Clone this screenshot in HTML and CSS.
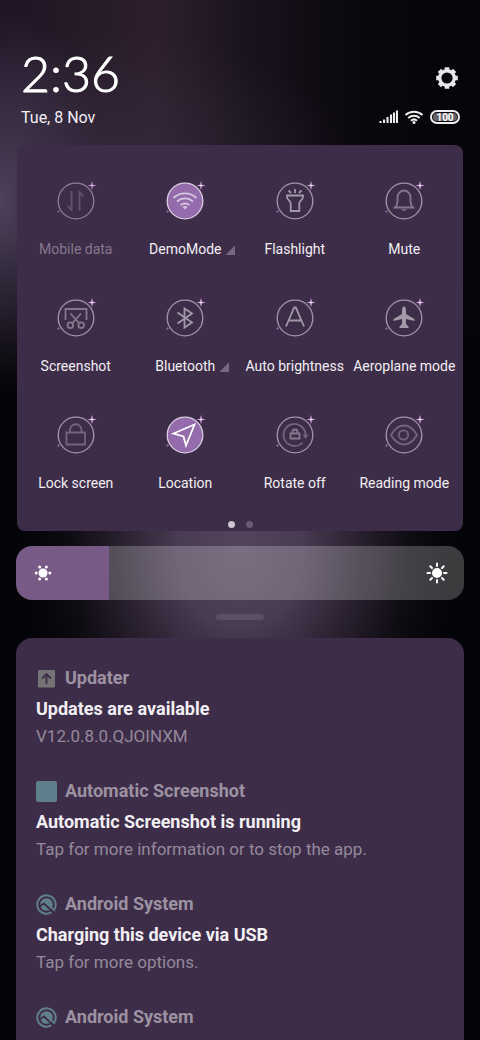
FILE: index.html
```html
<!DOCTYPE html>
<html lang="en">
<head>
<meta charset="utf-8">
<meta name="viewport" content="width=device-width, initial-scale=1">
<title>Control centre</title>
<link rel="stylesheet" href="styles.css">
</head>
<body>
<svg class="sprites" aria-hidden="true">
  <symbol id="ring" viewBox="0 0 44 44">
    <circle class="ring-shape" cx="22" cy="24" r="17.8"/>
    <path class="glow" d="M38 3.500L39 7.500L43 8.500L39 9.500L38 13.500L37 9.500L33 8.500L37 7.500Z"/>
    <path class="spark" d="M38 4.500L38.500 8L42 8.500L38.500 9L38 12.500L37.500 9L34 8.500L37.500 8Z"/>
    <path class="glow" d="M4.500 32.500L5 34L6.500 34.500L5 35L4.500 36.500L4 35L2.500 34.500L4 34Z"/>
  </symbol>
  <symbol id="android-q" viewBox="0 0 21 21">
    <path d="M15.500 18.200A9.200 9.200 0 1 1 18.500 15" fill="none" stroke="currentColor" stroke-width="2"/>
    <circle cx="10.500" cy="10.500" r="6.300" fill="currentColor"/>
    <path d="M3.500 12.500L8 9.500L16.500 17.500" fill="none" stroke="#3e2d48" stroke-width="1.800"/>
    <path d="M9.800 8.200L19 16.800" fill="none" stroke="currentColor" stroke-width="1.800"/>
  </symbol>
</svg>
<main class="shade">
  <header class="header">
    <div class="clock">
      <time class="time">2:36</time>
      <div class="date">Tue, 8 Nov</div>
    </div>
    <div class="status">
      <button class="settings" aria-label="Settings">
        <svg viewBox="0 0 24 24" width="24" height="24" fill="none" stroke="#e8e6ea"><circle cx="12" cy="12" r="7.300" stroke-width="3.400"/><path d="M12 1.200V4M12 20V22.800M1.200 12H4M20 12H22.800M4.400 4.400L6.300 6.300M17.700 17.700L19.600 19.600M19.600 4.400L17.700 6.300M6.300 17.700L4.400 19.600" stroke-width="4.600"/></svg>
      </button>
      <div class="indicators">
        <svg viewBox="0 0 19 14" width="19" height="14" aria-label="Signal"><path d="M1.500 11V13M5 9.500V13M8.500 7V13M12 4.500V13M15 2.500V13M18 .5V13" fill="none" stroke="#eee" stroke-width="2.100"/></svg>
        <svg viewBox="0 0 20 14" width="20" height="14" aria-label="Wi-Fi"><path d="M1.500 5A12.400 12.400 0 0 1 18.500 5M4.300 8A8.400 8.400 0 0 1 15.700 8M7 10.700A4.600 4.600 0 0 1 13 10.700" fill="none" stroke="#eee" stroke-width="2"/><circle cx="10" cy="12.400" r="1.500" fill="#eee"/></svg>
        <span class="battery"><span class="level">100</span></span>
      </div>
    </div>
  </header>

  <section class="toggles" aria-label="Quick settings">
    <div class="grid">
      <button class="tile off"><span class="icon"><svg viewBox="0 0 44 44"><use href="#ring"/><g class="dim"><path d="M17.500 14V33L13.500 28.500M25.500 34V15L29.500 19.500" stroke-width="2"/></g></svg></span><span class="label">Mobile data</span></button>
      <button class="tile on"><span class="icon"><svg viewBox="0 0 44 44"><use href="#ring"/><g class="soft"><path d="M10.500 21A16.500 16.500 0 0 1 33.500 21M14 24.700A11.500 11.500 0 0 1 30 24.700M17.600 28.200A6.500 6.500 0 0 1 26.400 28.200"/><path class="solid" d="M19.500 30Q22 27.800 24.500 30L22 32.500Z"/></g></svg></span><span class="label more">DemoMode</span></button>
      <button class="tile"><span class="icon"><svg viewBox="0 0 44 44"><use href="#ring"/><g class="line"><path d="M14 18.500H30V20Q30 22 27.500 24Q26.300 25 26.300 27V34H17.700V27Q17.700 25 16.500 24Q14 22 14 20ZM22 12V16M15.500 13.500L18 16M28.500 13.500L26 16"/></g></svg></span><span class="label">Flashlight</span></button>
      <button class="tile"><span class="icon"><svg viewBox="0 0 44 44"><use href="#ring"/><g class="mid"><path d="M13 30.500Q15.500 28 15.500 25V20.500A6.500 7 0 0 1 28.500 20.500V25Q28.500 28 31 30.500Z"/><path class="solid" d="M19 32.200H25Q22 35.200 19 32.200Z"/></g></svg></span><span class="label">Mute</span></button>

      <button class="tile"><span class="icon"><svg viewBox="0 0 44 44"><use href="#ring"/><g class="mid"><path d="M11.500 26V15H32.500V26M16.500 19.500L25.500 29.500M27 19.500L18 29.500"/><circle cx="16.300" cy="31.200" r="2.800"/><circle cx="27.200" cy="31.200" r="2.800"/></g></svg></span><span class="label">Screenshot</span></button>
      <button class="tile"><span class="icon"><svg viewBox="0 0 44 44"><use href="#ring"/><g class="line"><path d="M14.500 18.500L29 28.500L21.500 33.500V14.500L29 19.500L14.500 29.500"/></g></svg></span><span class="label more">Bluetooth</span></button>
      <button class="tile"><span class="icon"><svg viewBox="0 0 44 44"><use href="#ring"/><g class="line"><path d="M13 32.500L21.200 13.500H22.800L31 32.500M16 26.500H28"/></g></svg></span><span class="label">Auto brightness</span></button>
      <button class="tile"><span class="icon"><svg viewBox="0 0 44 44"><use href="#ring"/><g class="line"><path class="solid" d="M22 12Q24 13 24 16V20L32.500 25V27L24 25V30L26.500 32.500V34H17.500V32.500L20 30V25L11.500 27V25L20 20V16Q20 13 22 12Z"/></g></svg></span><span class="label">Aeroplane mode</span></button>

      <button class="tile"><span class="icon"><svg viewBox="0 0 44 44"><use href="#ring"/><g class="faint"><path d="M12.500 21.500H31V33.500H12.500ZM16 21.500V19A5.700 5.700 0 0 1 27.500 19V21.500"/></g></svg></span><span class="label">Lock screen</span></button>
      <button class="tile on"><span class="icon"><svg viewBox="0 0 44 44"><use href="#ring"/><g class="bright"><path d="M31.500 13.500L10.500 22.500L20.500 25.500L23 34.500Z"/></g></svg></span><span class="label">Location</span></button>
      <button class="tile"><span class="icon"><svg viewBox="0 0 44 44"><use href="#ring"/><g class="faint"><path d="M29.500 31.500A11 11 0 1 1 32.500 24"/><path class="solid" d="M29.500 23.500H35.500L32.500 28Z"/></g><g class="mid"><path d="M17.500 22.500H26.500V27.500H17.500ZM19.500 22.500V21A2.500 2.500 0 0 1 24.500 21V22.500"/></g></svg></span><span class="label">Rotate off</span></button>
      <button class="tile"><span class="icon"><svg viewBox="0 0 44 44"><use href="#ring"/><g class="faint"><path d="M9 24Q14.500 14.500 22 14.500T35 24Q29.500 33.500 22 33.500T9 24Z"/><circle cx="21.500" cy="24" r="4.700"/></g></svg></span><span class="label">Reading mode</span></button>
    </div>
    <div class="pages"><span class="dot current"></span><span class="dot"></span></div>
  </section>

  <div class="brightness">
    <input class="range" type="range" min="0" max="1000" value="208" aria-label="Brightness" style="--level: 20.8%">
    <svg class="sun low" viewBox="0 0 22 22" width="22" height="22" fill="#fff"><circle cx="11" cy="11" r="4.500"/><circle cx="4.200" cy="11" r="1.500"/><circle cx="17.800" cy="11" r="1.500"/><circle cx="7.600" cy="5.100" r="1.500"/><circle cx="14.400" cy="5.100" r="1.500"/><circle cx="7.600" cy="16.900" r="1.500"/><circle cx="14.400" cy="16.900" r="1.500"/></svg>
    <svg class="sun high" viewBox="0 0 22 22" width="22" height="22" fill="#fff" stroke="#fff" stroke-width="2" stroke-linecap="round"><circle cx="11" cy="11" r="4"/><path d="M11 1.500V4M11 18V20.500M1.500 11H4M18 11H20.500M4.300 4.300L6 6M16 16L17.700 17.700M17.700 4.300L16 6M6 16L4.300 17.700"/></svg>
  </div>
  <div class="handle"></div>

  <section class="notifications" aria-label="Notifications">
    <article class="note">
      <div class="app"><svg class="app-icon grey" viewBox="0 0 21 21"><rect x="2" y="2" width="17" height="17.500" rx="1" fill="currentColor"/><path d="M10.500 16V6M6 10.500L10.500 6L15 10.500" fill="none" stroke="#3e2d48" stroke-width="1.900"/></svg><span>Updater</span></div>
      <h2 class="title">Updates are available</h2>
      <p class="text">V12.0.8.0.QJOINXM</p>
    </article>
    <article class="note">
      <div class="app"><svg class="app-icon" viewBox="0 0 21 21"><rect width="21" height="21" rx="2" fill="currentColor"/></svg><span>Automatic Screenshot</span></div>
      <h2 class="title">Automatic Screenshot is running</h2>
      <p class="text">Tap for more information or to stop the app.</p>
    </article>
    <article class="note">
      <div class="app"><svg class="app-icon"><use href="#android-q"/></svg><span>Android System</span></div>
      <h2 class="title">Charging this device via USB</h2>
      <p class="text">Tap for more options.</p>
    </article>
    <article class="note">
      <div class="app"><svg class="app-icon"><use href="#android-q"/></svg><span>Android System</span></div>
      <h2 class="title">USB debugging connected</h2>
    </article>
  </section>
</main>
</body>
</html>
```
FILE: styles.css
```css
* { box-sizing: border-box; }
body { margin: 0; background: #050408; font-family: Roboto, sans-serif; color: #f2eff4; }
button { border: 0; padding: 0; background: none; color: inherit; font: inherit; }
.sprites { position: absolute; width: 0; height: 0; }

.shade {
  height: 100vh;
  overflow: hidden;
  padding: 48px 16px 0;
  background:
    radial-gradient(ellipse 210px 260px at 240px 550px, #54455d 0%, #493b52 30%, #35293ccc 55%, #19141e80 80%, transparent 100%),
    radial-gradient(ellipse 110px 190px at 0 200px, #4e425b 0%, #41364db3 40%, transparent 100%),
    radial-gradient(ellipse 260px 130px at 90px 160px, #3a2f4599 0%, transparent 100%),
    linear-gradient(180deg, transparent 150px, #050408 340px),
    linear-gradient(90deg, #1f1424, #2d1f2c 33%, #19131d 52%, #0a070d 75%, #050408);
}

.header { display: flex; justify-content: space-between; padding: 0 4px 0 5px; height: 97px; }
.time { display: block; font: 300 50px/50px Lato, sans-serif; color: #fff; -webkit-text-stroke: 1px #fff; }
.date { font-size: 16px; line-height: 20px; padding-top: 10px; }
.status { display: flex; flex-direction: column; align-items: flex-end; padding-top: 18px; }
.settings { width: 24px; height: 24px; margin-right: 1px; }
.settings svg { display: block; }
.indicators { display: flex; align-items: center; gap: 6px; margin-top: 20px; }
.battery { display: flex; width: 30px; height: 14px; padding: 1px; border: 2px solid #eee; border-radius: 7px; }
.level { flex: 1; border-radius: 4px; background: #66636a; font-size: 10px; font-weight: 700; line-height: 9px; text-align: center; color: #fff; }

.toggles { margin: 0 1px; padding: 32px 4px 3px; border-radius: 8px; background: #3e2d48; }
.grid { display: grid; grid-template-columns: repeat(4, 1fr); row-gap: 35px; }
.tile { display: flex; flex-direction: column; align-items: center; gap: 19px; white-space: nowrap; }
.icon { width: 44px; height: 44px; }
.icon svg { display: block; width: 44px; height: 44px; }
.icon path, .icon circle { fill: none; stroke: currentColor; stroke-width: 1.800; }
.icon .solid { fill: currentColor; stroke: none; }
.ring-shape { fill: var(--disc, none); stroke: var(--edge, #a096a8); stroke-width: 1.300; }
.glow { fill: #9563a8; stroke: none; }
.spark { fill: #f3e7f6; stroke: none; }
.on use { --disc: #946cab; --edge: #d9cede; }
.off .icon use { opacity: .8; }
.dim { color: #62536b; }
.faint { color: #73667b; }
.mid { color: #85788c; }
.line { color: #a299a8; }
.soft { color: #d5c5de; }
.bright { color: #fff; }
.label { position: relative; font-size: 14px; line-height: 19px; }
.off .label { color: #84788b; }
.more::after { content: ""; position: absolute; left: calc(100% + 4px); bottom: 4px; width: 10px; height: 10px; background: #76697e; clip-path: polygon(100% 0, 100% 100%, 0 100%); }
.pages { display: flex; justify-content: center; gap: 11px; padding-top: 28px; }
.dot { width: 7px; height: 7px; border-radius: 50%; background: #6a5b73; }
.current { background: #cdc6d1; }

.brightness { position: relative; margin-top: 15px; height: 54px; }
.range { appearance: none; display: block; width: 100%; height: 100%; margin: 0; border-radius: 16px; background: linear-gradient(90deg, #775a86 var(--level), rgba(255, 255, 255, .22) var(--level)); }
.range::-webkit-slider-thumb { appearance: none; width: 1px; height: 54px; }
.sun { position: absolute; top: 16px; pointer-events: none; }
.low { left: 16px; }
.high { right: 16px; }
.handle { width: 48px; height: 6px; margin: 14px auto 18px; border-radius: 3px; background: #5c4e65; }

.notifications { padding: 27px 20px; border-radius: 16px; background: #3e2d48; }
.note { padding-bottom: 30px; }
.app { display: flex; align-items: center; gap: 8px; font-size: 18px; font-weight: 700; line-height: 26px; color: #9c92a2; }
.app-icon { width: 21px; height: 21px; color: #607f8c; }
.grey { color: #747476; }
.title { margin: 6px 0 0; font-size: 18px; line-height: 24px; font-weight: 700; }
.text { margin: 3px 0 0; font-size: 17px; line-height: 24px; color: #94899b; }
```
